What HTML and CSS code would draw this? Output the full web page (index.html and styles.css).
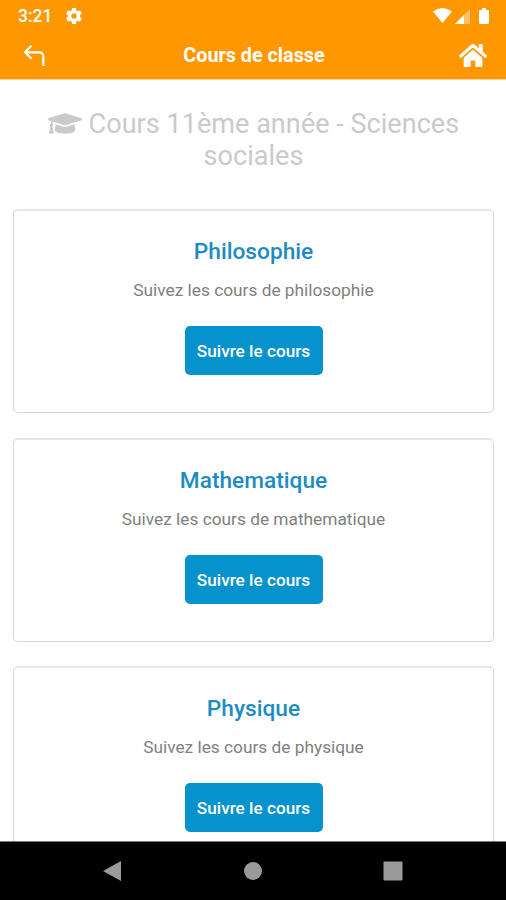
FILE: index.html
```html
<!DOCTYPE html>
<html lang="fr">
<head>
  <meta charset="UTF-8" />
  <meta name="viewport" content="width=device-width, initial-scale=1" />
  <title>Cours de classe</title>
  <link rel="stylesheet" href="styles.css">
</head>
<body>
  <div class="status-bar">
    <div class="status-left">
      <span>3:21</span>
      <svg class="gear" viewBox="2 2 20 20" width="16" height="16"><path fill="#fff" fill-rule="evenodd" d="M19.43 12.98c.04-.32.07-.64.07-.98s-.03-.66-.07-.98l2.11-1.65c.19-.15.24-.42.12-.64l-2-3.46c-.12-.22-.39-.3-.61-.22l-2.49 1c-.52-.4-1.08-.73-1.69-.98l-.38-2.65C14.46 2.18 14.25 2 14 2h-4c-.25 0-.46.18-.49.42l-.38 2.65c-.61.25-1.17.59-1.69.98l-2.49-1c-.23-.09-.49 0-.61.22l-2 3.46c-.13.22-.07.49.12.64l2.11 1.65c-.04.32-.07.65-.07.98s.03.66.07.98l-2.11 1.65c-.19.15-.24.42-.12.64l2 3.46c.12.22.39.3.61.22l2.49-1c.52.4 1.08.73 1.69.98l.38 2.65c.03.24.24.42.49.42h4c.25 0 .46-.18.49-.42l.38-2.65c.61-.25 1.17-.59 1.69-.98l2.49 1c.23.09.49 0 .61-.22l2-3.46c.12-.22.07-.49-.12-.64l-2.11-1.65zM12 15.5c-1.93 0-3.5-1.57-3.5-3.5s1.57-3.5 3.5-3.5 3.5 1.57 3.5 3.5-1.57 3.5-3.5 3.5z"/></svg>
    </div>
    <div class="status-right">
      <svg class="wifi" viewBox="0 0 19 15" width="19" height="15"><path fill="#fff" d="M0 3.500Q9.500-3.500 19 3.500L9.500 15Z"/></svg>
      <svg viewBox="0 0 15 15" width="15" height="15"><path fill="#fff" opacity=".4" d="M15 0V15H0Z"/><path fill="#fff" d="M9 6V15H0Z"/></svg>
      <svg class="battery" viewBox="0 0 10 16" width="10" height="16"><path fill="#fff" d="M3 0h4v2h2q1 0 1 1v12q0 1-1 1H1q-1 0-1-1V3q0-1 1-1h2Z"/></svg>
    </div>
  </div>

  <header class="main-header">
    <a href="#" class="nav-icon" aria-label="Retour">
      <svg viewBox="0 0 22 22" width="22" height="22"><path fill="none" stroke="#fff" stroke-width="2.2" stroke-linejoin="round" d="M8.500 .8 2 7.300l6.500 6.500M2 7.300H16q4.300 0 4.300 4.300V21"/></svg>
    </a>
    <h1 class="header-title">Cours de classe</h1>
    <a href="#" class="nav-icon" aria-label="Accueil">
      <svg viewBox="0 32 576 448" width="28" height="23" preserveAspectRatio="none"><path fill="#fff" d="M280.370 148.260L96 300.110V464a16 16 0 0 0 16 16l112.060-.29a16 16 0 0 0 15.920-16V368a16 16 0 0 1 16-16h64a16 16 0 0 1 16 16v95.640a16 16 0 0 0 16 16.050L464 480a16 16 0 0 0 16-16V300L295.670 148.260a12.190 12.190 0 0 0-15.300 0zM571.600 251.470L488 182.560V44.050a12 12 0 0 0-12-12h-56a12 12 0 0 0-12 12v72.610L318.470 43a48 48 0 0 0-61 0L4.340 251.470a12 12 0 0 0-1.600 16.900l25.500 31A12 12 0 0 0 45.150 301l235.220-193.740a12.190 12.190 0 0 1 15.300 0L530.900 301a12 12 0 0 0 16.900-1.600l25.500-31a12 12 0 0 0-1.700-16.930z"/></svg>
    </a>
  </header>

  <main class="content">
    <h2 class="page-title">
      <svg class="cap" viewBox="0 64 640 384" width="34" height="21"><path fill="currentColor" d="M622.340 153.200L343.400 67.500c-15.200-4.670-31.600-4.670-46.790 0L17.660 153.200c-23.540 7.230-23.540 38.360 0 45.590l48.630 14.940c-10.670 13.190-17.230 29.280-17.880 46.900C38.780 266.150 32 276.110 32 288c0 10.780 5.680 19.850 13.860 25.650L20.330 428.530C18.110 438.520 25.710 448 35.940 448h56.110c10.240 0 17.840-9.480 15.620-19.470L82.140 313.650C90.320 307.850 96 298.780 96 288c0-11.570-6.470-21.250-15.660-26.870.76-15.020 8.440-28.300 20.690-36.720L296.600 284.500c9.060 2.780 26.440 6.250 46.790 0l278.950-85.700c23.550-7.240 23.550-38.360 0-45.600zM352.790 315.090c-28.530 8.760-52.840 3.920-65.590 0l-145.020-44.550L128 384c0 35.350 85.960 64 192 64s192-28.650 192-64l-14.180-113.470-145.030 44.560z"/></svg>
      Cours 11ème année - Sciences sociales
    </h2>

    <section class="card">
      <h3 class="card-title">Philosophie</h3>
      <p class="card-text">Suivez les cours de philosophie</p>
      <a href="#" class="btn">Suivre le cours</a>
    </section>

    <section class="card">
      <h3 class="card-title">Mathematique</h3>
      <p class="card-text">Suivez les cours de mathematique</p>
      <a href="#" class="btn">Suivre le cours</a>
    </section>

    <section class="card">
      <h3 class="card-title">Physique</h3>
      <p class="card-text">Suivez les cours de physique</p>
      <a href="#" class="btn">Suivre le cours</a>
    </section>
  </main>

  <nav class="bottom-nav">
    <svg viewBox="0 0 20 22" width="20" height="22"><path fill="#9a9a9a" d="M19 1v20L1 11Z"/></svg>
    <svg viewBox="0 0 20 20" width="20" height="20"><circle cx="10" cy="10" r="9" fill="#9a9a9a"/></svg>
    <svg viewBox="0 0 20 20" width="20" height="20"><rect x=".5" y=".5" width="19" height="19" rx="1" fill="#9a9a9a"/></svg>
  </nav>
</body>
</html>
```

FILE: styles.css
```css
* {
  box-sizing: border-box;
}

body {
  margin: 0;
  height: 900px;
  display: flex;
  flex-direction: column;
  overflow: hidden;
  background: #fff;
  font-family: Roboto, "Liberation Sans", sans-serif;
}

.status-bar {
  flex: none;
  height: 32px;
  padding: 0 17px 0 18px;
  display: flex;
  justify-content: space-between;
  align-items: center;
  background: #ff9800;
  color: #fff;
  font-size: 17.5px;
  font-weight: 500;
}

.status-left {
  display: flex;
  align-items: center;
  gap: 14px;
}

.status-right {
  display: flex;
  align-items: center;
  gap: 3px;
}

.wifi {
  margin-bottom: 2px;
}

.battery {
  margin-left: 6px;
}

.main-header {
  flex: none;
  height: 48px;
  padding: 0 19px 0 23px;
  display: flex;
  justify-content: space-between;
  align-items: center;
  background: #ff9800;
  border-bottom: 1px solid #ffd699;
}

.nav-icon {
  width: 28px;
  display: flex;
}

.header-title {
  margin: 0 2px 0 0;
  color: #fff;
  font-size: 19.8px;
  font-weight: 700;
}

.content {
  flex: 1;
  min-height: 0;
  padding: 28px 12px 0 13px;
  overflow: hidden;
}

.page-title {
  margin: 0 0 37px;
  padding: 0 30px;
  color: #cacaca;
  font-size: 27.1px;
  font-weight: 400;
  line-height: 32px;
  text-align: center;
}

.cap {
  vertical-align: -1px;
}

.card {
  height: 204px;
  margin-bottom: 24.5px;
  padding: 28px 12px 0;
  border: 1px solid #d6d6d6;
  border-top: 2px solid #e8e8e8;
  border-radius: 5px;
  text-align: center;
}

.card-title {
  margin: 0;
  color: #1e8bc3;
  font-size: 22.7px;
  font-weight: 500;
  line-height: 26px;
}

.card-text {
  margin: 14px 0 25px;
  color: #808080;
  font-size: 17.3px;
  line-height: 22px;
}

.btn {
  display: inline-block;
  height: 49px;
  width: 138px;
  border-radius: 5px;
  background: #0693cd;
  color: #fff;
  font-size: 17.2px;
  font-weight: 500;
  line-height: 50px;
  text-decoration: none;
}

.bottom-nav {
  flex: none;
  height: 59px;
  padding: 0 103px 0 102px;
  display: flex;
  justify-content: space-between;
  align-items: center;
  background: #000;
  border-top: 1px solid #777;
}
```
